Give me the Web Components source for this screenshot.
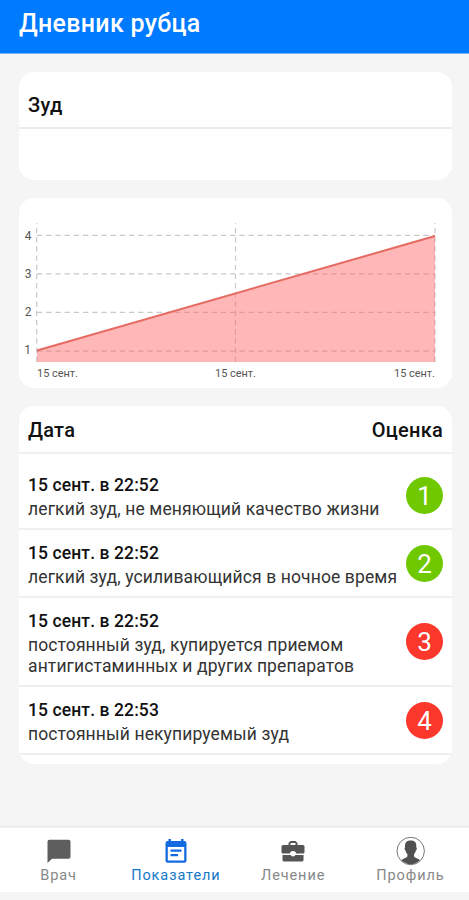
<!DOCTYPE html>
<html lang="ru">
<head>
<meta charset="utf-8">
<title>Дневник рубца</title>
<style>
html,body{margin:0;height:100%;background:#f5f5f5}
body{font-family:Roboto,"Noto Sans",sans-serif;color:#111}
</style>
</head>
<body>
<diary-app></diary-app>
<script>
const define = (name, html, init) => {
  const t = document.createElement('template');
  t.innerHTML = html;
  customElements.define(name, class extends HTMLElement {
    constructor() {
      super();
      this.attachShadow({mode: 'open'}).append(t.content.cloneNode(true));
    }
    connectedCallback() { if (init) init(this, this.shadowRoot); }
  });
};

define('app-bar', `<style>
:host{display:block;height:53px;background:#007aff;border-bottom:1px solid #74b4fa;box-sizing:content-box;color:#fff}
h1{margin:0;padding:8px 19px 0;font-size:25px;line-height:32px;font-weight:500;letter-spacing:.3px;white-space:nowrap}
</style><h1><slot></slot></h1>`);

define('ui-card', `<style>
:host{display:block;background:#fff;border-radius:15px;overflow:hidden}
</style><slot></slot>`);

define('symptom-title', `<style>
:host{display:block;height:108px}
h2{margin:0;box-sizing:border-box;height:57px;padding:20px 9px 0;font-size:20px;line-height:27px;font-weight:500;letter-spacing:.3px;border-bottom:2px solid #ebebeb}
</style><h2><slot></slot></h2>`);

define('score-chart', `<style>
:host{display:block;height:190px}
svg{display:block}
text{font-family:Roboto,sans-serif;font-size:11px;fill:#555}
.y text{font-size:12px}
.grid{stroke:#c9c9c9;stroke-width:1.2;stroke-dasharray:5.3 3.9}
</style>
<svg width="433" height="190" viewBox="0 0 433 190">
<g class="grid"><path d="M18 37.4H416M18 75.8H416M18 114.4H416M18 153.2H416M17.7 164V25M216.5 164V25M416 164V25"/></g>
<path d="M18 152.5L416 38V164H18Z" fill="#ff5b5b" fill-opacity=".44"/>
<path d="M18 152.5L416 38" stroke="#e56a62" stroke-width="2" fill="none"/>
<g class="y" text-anchor="end"><text x="12.500" y="41.500">4</text><text x="12.500" y="79.500">3</text><text x="12.500" y="118">2</text><text x="12" y="156">1</text></g>
<g><text x="18" y="178.500" textLength="41">15 сент.</text><text x="196" y="178.500" textLength="41">15 сент.</text><text x="375" y="178.500" textLength="41">15 сент.</text></g>
</svg>`);

define('score-head', `<style>
:host{display:flex;justify-content:space-between;box-sizing:border-box;height:48px;padding:11px 9px 0;border-bottom:2px solid #efefef;font-size:20px;line-height:27px;font-weight:500;letter-spacing:.25px}
</style><slot name="left"></slot><slot name="right"></slot>`);

define('score-row', `<style>
:host{display:flex;align-items:center;gap:8px;box-sizing:border-box;padding:10px 9px;border-bottom:2px solid #efefef}
.t{flex:1;min-width:0;padding-top:1px;margin-bottom:-2px}
b{display:block;font-size:17.5px;line-height:24px;font-weight:500;letter-spacing:.1px;padding-bottom:2px}
p{margin:0;font-size:17.5px;line-height:21px;color:#333;letter-spacing:.12px;white-space:nowrap}
i{flex:none;width:37px;height:37px;border-radius:50%;background:var(--c);color:#fff;font-style:normal;font-size:26px;line-height:38px;text-align:center}
</style><div class="t"><b></b><p><slot></slot></p></div><i></i>`, (el, r) => {
  r.querySelector('b').textContent = el.getAttribute('date');
  const s = +el.getAttribute('score');
  r.querySelector('i').textContent = s;
  el.style.setProperty('--c', s > 2 ? '#fc382d' : '#70c800');
});

define('tab-item', `<style>
:host{flex:1;display:flex;flex-direction:column;align-items:center;color:#888;font-size:14.5px;line-height:18px;letter-spacing:.9px}
:host([active]){color:#1478c8}
.ic{display:flex;align-items:center;height:30px;margin-top:-1px;padding-bottom:1px}
</style><div class="ic"><slot name="icon"></slot></div><span><slot></slot></span>`);

define('tab-bar', `<style>
:host{display:flex;box-sizing:border-box;height:67px;background:#fff;border-top:3px solid #eee;padding:9px 0 0;margin-bottom:8px}
</style><slot></slot>`);

define('diary-app', `<style>
:host{display:flex;flex-direction:column;height:900px;overflow:hidden}
main{flex:1;min-height:0;display:flex;flex-direction:column;gap:18px;padding:18px 17px 0 19px}
.list{height:358px}
.list score-row:first-of-type{padding-top:18px}
svg{display:block}
</style>
<app-bar>Дневник рубца</app-bar>
<main>
<ui-card><symptom-title>Зуд</symptom-title></ui-card>
<ui-card><score-chart></score-chart></ui-card>
<ui-card class="list">
<score-head><span slot="left">Дата</span><span slot="right">Оценка</span></score-head>
<score-row date="15 сент. в 22:52" score="1">легкий зуд, не меняющий качество жизни</score-row>
<score-row date="15 сент. в 22:52" score="2">легкий зуд, усиливающийся в ночное время</score-row>
<score-row date="15 сент. в 22:52" score="3">постоянный зуд, купируется приемом<br>антигистаминных и других препаратов</score-row>
<score-row date="15 сент. в 22:53" score="4">постоянный некупируемый зуд</score-row>
</ui-card>
</main>
<tab-bar>
<tab-item><svg slot="icon" width="24" height="24" viewBox="0 0 24 24"><path fill="#5e5e5e" d="M2.500 .8h19a2 2 0 0 1 2 2v15a2 2 0 0 1-2 2H5L.5 24V2.800a2 2 0 0 1 2-2z"/></svg>Врач</tab-item>
<tab-item active><svg slot="icon" width="22" height="24" viewBox="0 0 22 24"><path fill="#126be0" fill-rule="evenodd" d="M3.500 0h2.500v2h10V0h2.500v2h.8a2.200 2.200 0 0 1 2.200 2.200v17.300a2.200 2.200 0 0 1-2.200 2.200H2.700a2.200 2.200 0 0 1-2.200-2.200V4.200A2.200 2.200 0 0 1 2.700 2h.8zM2.800 8v13.400h16.400V8zM5.500 10.500h11v2.200h-11zM5.500 15h7.500v2.200H5.500z"/></svg>Показатели</tab-item>
<tab-item><svg slot="icon" width="24" height="24" viewBox="0 0 24 24"><path fill="#555" fill-rule="evenodd" d="M7.500 6V4l2-2h5l2 2v2H22a1.500 1.500 0 0 1 1.500 1.500V13a1.500 1.500 0 0 1-1.500 1.500h-7a3 2.500 0 0 0-6 0H2A1.500 1.500 0 0 1 .5 13V7.500A1.500 1.500 0 0 1 2 6zM9.500 6h5V4h-5zM1.500 16H9.500a2.600 2 0 0 0 5 0H22.500v5a1.500 1.500 0 0 1-1.500 1.500H3A1.500 1.500 0 0 1 1.500 21z"/></svg>Лечение</tab-item>
<tab-item><svg slot="icon" width="30" height="30" viewBox="0 0 30 30"><circle cx="15.700" cy="15" r="13.700" fill="#fff" stroke="#777" stroke-width="1"/><path transform="translate(.7 0)" fill="#505050" d="M15 4.500c4.500 0 6 2.500 5.600 7 1 .3.500 2.800-.5 3.300-.4 1.800-1 2.700-1.800 3.400v2.300c1.200 1.600 4 2 6 3.500A13.200 13.200 0 0 1 15 28.200 13.200 13.200 0 0 1 5.700 24c2-1.500 4.800-1.900 6-3.500v-2.300c-.8-.7-1.400-1.600-1.800-3.400-1-.5-1.500-3-.5-3.300C9 7 10.500 4.500 15 4.500z"/></svg>Профиль</tab-item>
</tab-bar>`);
</script>
</body>
</html>
